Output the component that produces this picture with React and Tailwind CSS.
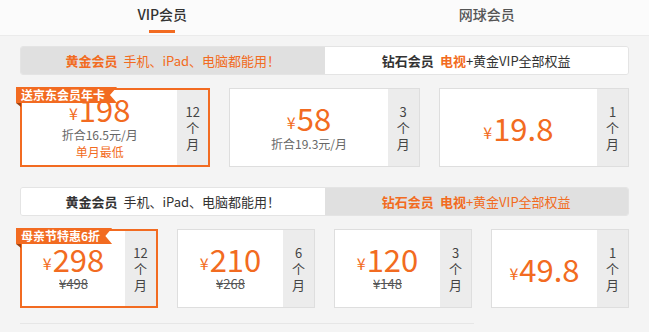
import React from "react";

const FONT = { fontFamily: '"Noto Sans CJK SC", "Noto Sans", sans-serif' };

function Badge({ text }) {
  return (
    <div className="absolute -left-[6px] -top-[3px] z-10">
      <div
        className="flex h-[16px] items-center bg-[#f26b21] pl-[5px] pr-[12px] text-[12px] font-bold leading-none text-white"
        style={{ clipPath: "polygon(0 0, 100% 0, 93% 50%, 100% 100%, 0 100%)" }}
      >
        {text}
      </div>
      <div className="h-0 w-0 border-l-[5px] border-t-[4px] border-l-transparent border-t-[#9a4312]" />
    </div>
  );
}

function Side({ n }) {
  return (
    <div className="flex w-[31px] shrink-0 flex-col items-center justify-center bg-[#ececec] text-[13px] leading-[16px] text-[#444]">
      <span>{n}</span>
      <span>个</span>
      <span>月</span>
    </div>
  );
}

function Card({ price, sub, subOrange, strike, months, active, badge }) {
  return (
    <div
      className={`relative flex h-[79px] bg-white ${
        active ? "border-2 border-[#f26b21]" : "border border-[#dedede]"
      }`}
    >
      {badge && <Badge text={badge} />}
      <div className="flex flex-1 flex-col items-center justify-center">
        <div className="flex h-[26px] items-end text-[#f26b21]">
          <span className="mr-[1px] text-[16px] leading-[18px]">¥</span>
          <span className="text-[31px] leading-[26px]">{price}</span>
        </div>
        {sub && <div className="mt-[6px] text-[12px] leading-[14px] text-[#666]">{sub}</div>}
        {subOrange && (
          <div className="mt-[3px] text-[12px] leading-[14px] text-[#f26b21]">{subOrange}</div>
        )}
        {strike && (
          <div className="mt-[5px] text-[13px] leading-[14px] text-[#555] line-through">¥{strike}</div>
        )}
      </div>
      <Side n={months} />
    </div>
  );
}

function Segment({ leftActive }) {
  const on = "bg-[#e0e0e0] text-[#f26b21]";
  const off = "bg-white text-[#333]";
  return (
    <div className="mx-[20px] flex h-[29px] overflow-hidden rounded-[3px] border border-[#e4e4e4] text-[13px]">
      <div className={`flex flex-1 items-center justify-center ${leftActive ? on : off}`}>
        <span className={`font-bold ${leftActive ? "text-[#f26b21]" : "text-[#333]"}`}>黄金会员</span>
        <span className="ml-[6px]">手机、iPad、电脑都能用！</span>
      </div>
      <div className={`flex flex-1 items-center justify-center ${leftActive ? off : on}`}>
        <span className="font-bold">钻石会员</span>
        <span className="ml-[6px] font-bold text-[#f26b21]">电视</span>
        <span className={leftActive ? "text-[#333]" : "text-[#f26b21]"}>+黄金VIP全部权益</span>
      </div>
    </div>
  );
}

export default function App() {
  return (
    <div className="h-[332px] w-[649px] overflow-hidden bg-[#f4f4f4]" style={FONT}>
      <div className="flex h-[36px] border-b border-[#ebebeb] bg-[#fbfbfb]">
        <div className="relative flex flex-1 items-center justify-center pb-[6px] text-[14px] font-medium text-[#333]">
          VIP会员
          <div className="absolute bottom-[2px] left-1/2 h-[3px] w-[26px] -translate-x-1/2 bg-[#f26b21]" />
        </div>
        <div className="flex flex-1 items-center justify-center pb-[6px] text-[14px] font-medium text-[#555]">
          网球会员
        </div>
      </div>

      <div className="mt-[10px]">
        <Segment leftActive />
      </div>

      <div className="mt-[13px] grid grid-cols-3 gap-[19px] px-[20px]">
        <Card price="198" sub="折合16.5元/月" subOrange="单月最低" months="12" active badge="送京东会员年卡" />
        <Card price="58" sub="折合19.3元/月" months="3" />
        <Card price="19.8" months="1" />
      </div>

      <div className="mt-[20px]">
        <Segment leftActive={false} />
      </div>

      <div className="mt-[13px] grid grid-cols-4 gap-[19px] px-[20px]">
        <Card price="298" strike="498" months="12" active badge="母亲节特惠6折" />
        <Card price="210" strike="268" months="6" />
        <Card price="120" strike="148" months="3" />
        <Card price="49.8" months="1" />
      </div>

      <div className="ml-[20px] mt-[15px] h-px w-[454px] bg-[#e6e6e6]" />
    </div>
  );
}
